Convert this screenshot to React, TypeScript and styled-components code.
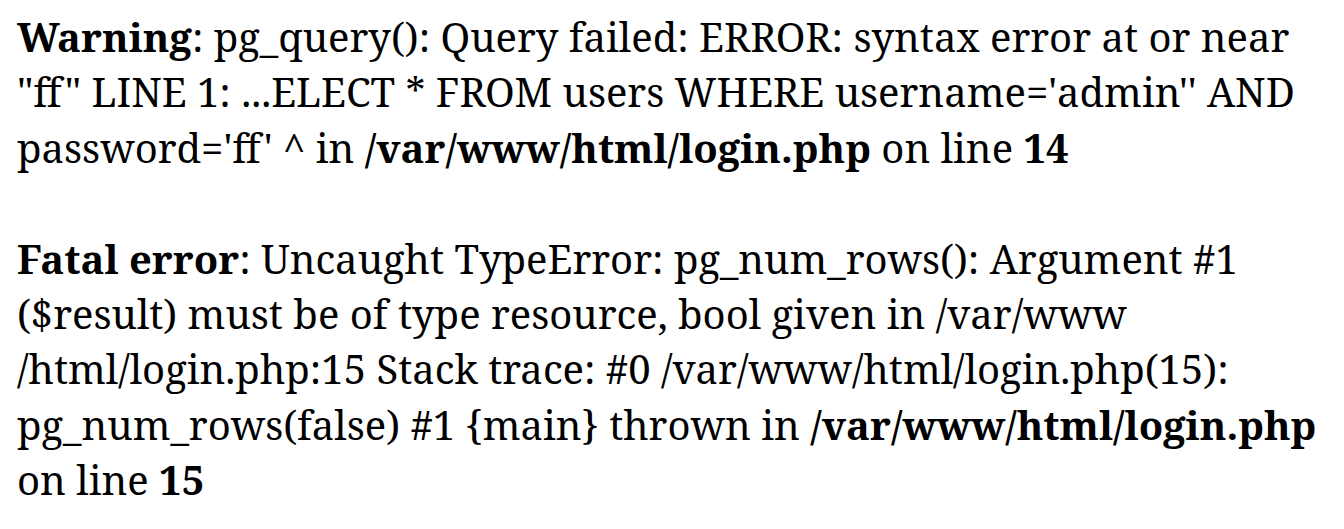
import React from "react";
import styled, { createGlobalStyle } from "styled-components";

const GlobalStyle = createGlobalStyle`
  html, body { margin: 0; background: #ffffff; }
  body { color: #000000; }
`;

const Page = styled.div`
  box-sizing: border-box;
  width: 1344px;
  padding: 9px 14px 0 17px;
  font-family: "Noto Serif", "DejaVu Serif", serif;
  font-size: 40px;
  line-height: 55.4px;
  color: #000;
`;

const Notice = styled.div`
  & + & {
    margin-top: 55.4px;
  }
`;

const B = styled.b`
  font-weight: 700;
`;

export default function App() {
  return (
    <>
      <GlobalStyle />
      <Page>
        <Notice>
          <B>Warning</B>: pg_query(): Query failed: ERROR: syntax error at or near "ff" LINE 1: ...ELECT * FROM
          users WHERE username='admin'' AND password='ff' ^ in <B>/var/www/html/login.php</B> on line <B>14</B>
        </Notice>
        <Notice>
          <B>Fatal error</B>: Uncaught TypeError: pg_num_rows(): Argument #1 ($result) must be of type resource,
          bool given in /var/www<wbr />/html/login.php:15 Stack trace: #0 /var/www/html/login.php(15):
          pg_num_rows(false) #1 {"{main}"} thrown in <B>/var/www/html/login.php</B> on line <B>15</B>
        </Notice>
      </Page>
    </>
  );
}
